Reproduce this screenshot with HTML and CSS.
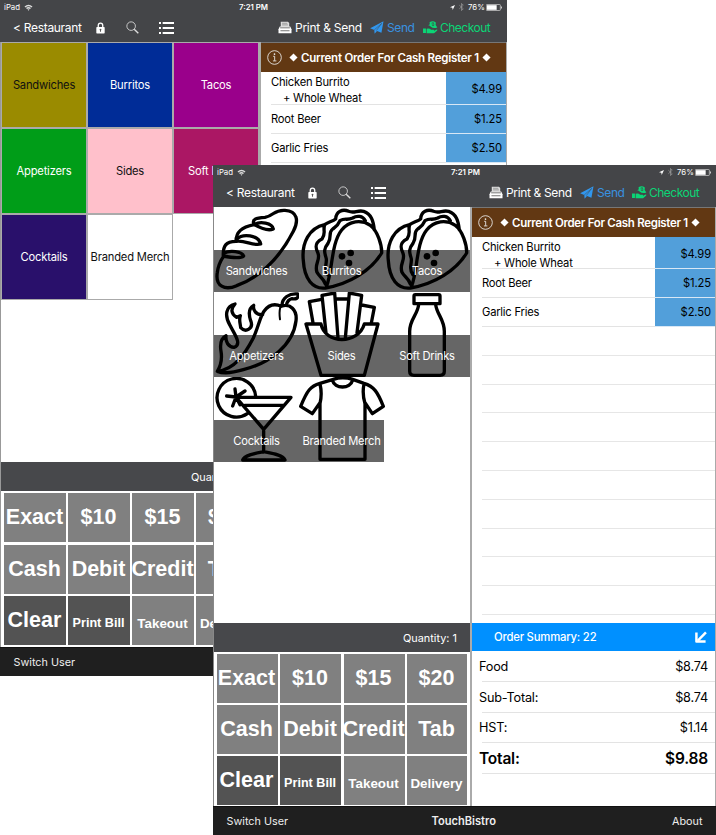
FILE: index.html
```
<!DOCTYPE html>
<html lang="en">
<head>
<meta charset="utf-8">
<title>TouchBistro</title>
<link rel="stylesheet" href="styles.css">
</head>
<body>
<svg class="sprite" aria-hidden="true">
  <symbol id="wifi" viewBox="0 0 18 14"><path d="M1 5Q9-2 17 5L15 7Q9 2 3 7ZM4 8Q9 4 14 8L12 10Q9 7.500 6 10ZM7 11Q9 9.500 11 11L9 13.500Z" fill="#ddd"/></symbol>
  <symbol id="lock" viewBox="0 0 28 36"><path d="M7 16V10a7 7 0 0 1 14 0v6" fill="none" stroke="#fff" stroke-width="4"/><rect x="1" y="15" width="26" height="20" rx="2" fill="#fff"/><path d="M14 20a3 3 0 0 1 1.500 5.500V30h-3v-4.500A3 3 0 0 1 14 20" fill="#555"/></symbol>
  <symbol id="search" viewBox="0 0 38 38"><circle cx="15" cy="15" r="12.500" fill="none" stroke="#ddd" stroke-width="2.500"/><path d="M24 24L36 36" stroke="#ddd" stroke-width="4"/></symbol>
  <symbol id="list" viewBox="0 0 45 36"><path d="M0 3h6M0 18h6M0 33h6M11 3h34M11 18h34M11 33h34" stroke="#fff" stroke-width="6"/></symbol>
  <symbol id="printer" viewBox="0 0 42 40"><path d="M8 18V2h22l4 4v12Z" fill="#ddd"/><path d="M12 7h16M12 12h18" stroke="#777" stroke-width="2"/><path d="M5 17h32l4 8v13H1V25Z" fill="#fff"/><path d="M6 21h30M7 30h28" stroke="#555" stroke-width="2.500"/></symbol>
  <symbol id="plane" viewBox="0 0 40 38"><path d="M39 1L33 34 20 29 13 37 12 26 0 21Z" fill="#3197ef"/><path d="M12 26L34 7 18 28" fill="none" stroke="#454648" stroke-width="1.500"/></symbol>
  <symbol id="pay" viewBox="0 0 46 40"><path d="M0 23h9v14H0ZM11 24q8-3 14 3h8q3 2-2 4h-9l12-1 8-4q4 0 1 4l-9 8H11Z" fill="#0bd576"/><path d="M20 4q10-7 20 1-3 6 1 10l3 5q-12 4-20-2-2-4-8-5l5-3Z" fill="#0bd576"/><path d="M26 7q4-3 8 0M27 12q4 4 8 0M31 5v10" fill="none" stroke="#454648" stroke-width="2"/></symbol>
  <symbol id="arrow" viewBox="0 0 15 15"><path d="M15 0L8 15 7 8 0 7Z" fill="#fff"/></symbol>
  <symbol id="bt" viewBox="0 0 14 22"><path d="M1 6l11 10-5 5V1l5 5L1 16" fill="none" stroke="#999" stroke-width="2"/></symbol>
  <symbol id="battery" viewBox="0 0 48 20"><rect x="1" y="1" width="42" height="18" rx="2" fill="none" stroke="#ddd" stroke-width="2"/><path d="M3 3h29v14H3Z" fill="#fff"/><path d="M45 6v8l3-2V8Z" fill="#ccc"/></symbol>
  <symbol id="info" viewBox="0 0 44 44"><circle cx="22" cy="22" r="20" fill="none" stroke="#eee" stroke-width="2.500"/><circle cx="22" cy="12" r="2.500" fill="#eee"/><path d="M18 18.500h4.500v13M17.500 32h10" fill="none" stroke="#eee" stroke-width="2.500"/></symbol>
  <symbol id="diamond" viewBox="0 0 10 10"><path d="M5 0.500L9.500 5 5 9.500 0.500 5Z" fill="#fff"/></symbol>
  <symbol id="down-left" viewBox="0 0 34 34"><path d="M31 4L8 27" stroke="#fff" stroke-width="7" fill="none"/><path d="M4 4V30H30" stroke="#fff" stroke-width="7" fill="none" stroke-linejoin="round"/></symbol>

  <symbol id="bread" viewBox="12 9 258 255"><path d="M132 62C125 45 138 42 165 40C195 34 190 17 225 19C262 21 267 50 250 82C215 150 160 215 80 245C45 260 15 247 22 205C25 182 32 170 40 158C38 125 48 112 78 112C78 83 95 70 132 62C150 50 187 57 190 75C173 82 150 72 130 60M80 105C98 88 145 92 152 120C130 127 105 108 79 112M40 148C60 137 96 142 101 156C90 166 60 160 40 156"/></symbol>
  <symbol id="taco" viewBox="9 9 258 255"><path d="M86 62C40 72 16 116 22 170C25 225 50 256 88 252C160 240 225 200 257 147C258 125 245 80 223 64C196 46 160 50 137 78C105 118 110 200 92 246M86 62C95 55 110 52 119 45C120 22 140 14 158 22C175 29 185 17 203 22C226 30 232 50 235 78M86 62C80 80 91 87 78 105C58 115 56 128 66 148C74 168 54 180 63 205C70 219 83 222 88 240M208 50C200 35 183 34 170 42C153 50 147 41 132 50C125 67 117 70 110 75C95 86 109 99 96 118C79 139 88 150 91 165C92 185 82 196 96 213"/><g class="seed"><circle cx="138" cy="157" r="10"/><circle cx="164" cy="147" r="10"/><circle cx="159" cy="177" r="10"/></g></symbol>
  <symbol id="pepper" viewBox="12 12 258 255"><path d="M22 250C75 243 105 198 130 150C145 117 150 87 162 70C178 47 198 48 214 55C240 44 262 67 258 98C250 170 180 225 100 245C70 254 40 257 22 250C34 230 37 213 33 190C29 165 34 150 48 143C46 162 55 177 72 178C98 169 72 137 60 112C43 83 47 55 75 48C62 63 62 76 80 88L91 83C86 97 91 105 92 119C107 135 132 122 122 98C115 77 117 60 131 52C128 65 138 82 158 80M216 51C217 30 237 15 263 18C268 31 257 34 246 32C235 34 231 42 229 52"/><path d="M211 58Q207 72 210 94" stroke-width="6"/></symbol>
  <symbol id="fries" viewBox="9 12 258 255"><path d="M30 108H75C87 170 187 170 205 108H246L205 262H75ZM51 104L40 41 77 34M90 135L78 22 116 15 126 150M120 33H157M148 150L160 15 197 22 183 134M197 51L235 58 226 105"/></symbol>
  <symbol id="bottle" viewBox="265 12 258 255"><path d="M355 24Q355 20 359 20H429Q433 20 433 24V47H355ZM369 50C366 80 342 94 342 130V250Q342 262 355 262H433Q446 262 446 250V130C446 94 424 80 420 50"/></symbol>
  <symbol id="cocktail" viewBox="12 15 258 255"><path d="M137 73A58 58 0 1 0 112 125M78 76H243L161 172ZM104 100H220M161 172V240M98 264C103 248 140 243 161 239C182 243 220 248 225 264ZM78 75L75 51M78 75L50 72M78 75L68 102M78 75L90 98M78 75L105 57"/></symbol>
  <symbol id="shirt" viewBox="267 15 258 255"><path d="M330 95V262H465V95M330 92L307 125 272 103C292 54 302 42 330 34L370 22Q398 13 428 22L462 34C492 43 503 60 520 103L487 125 465 92M330 36Q337 65 330 95M462 36Q456 65 465 95M367 24C374 52 421 52 428 24"/></symbol>
</svg>

<main class="stage">
  <section class="ipad ipad-back">
    <header class="top">
      <div class="status"><span class="device">iPad</span><svg class="i-wifi"><use href="#wifi"/></svg><span class="clock">7:21 PM</span><svg class="i-arrow"><use href="#arrow"/></svg><svg class="i-bt"><use href="#bt"/></svg><span class="pct">76%</span><svg class="i-battery"><use href="#battery"/></svg></div>
      <nav class="tools"><span class="back">&lt; Restaurant</span><svg class="i-lock"><use href="#lock"/></svg><svg class="i-search"><use href="#search"/></svg><svg class="i-list"><use href="#list"/></svg><svg class="i-printer"><use href="#printer"/></svg><span class="t-print">Print &amp; Send</span><svg class="i-plane"><use href="#plane"/></svg><span class="t-send">Send</span><svg class="i-pay"><use href="#pay"/></svg><span class="t-check">Checkout</span></nav>
    </header>
    <div class="body">
      <div class="left">
        <div class="menu swatches">
          <div class="tile olive">Sandwiches</div><div class="tile blue">Burritos</div><div class="tile purple">Tacos</div>
          <div class="tile green">Appetizers</div><div class="tile pink">Sides</div><div class="tile rose">Soft Drinks</div>
          <div class="tile indigo">Cocktails</div><div class="tile plain">Branded Merch</div>
        </div>
        <div class="qty"><span>Quantity: 1</span></div>
        <div class="keys">
          <div>Exact</div><div>$10</div><div>$15</div><div>$20</div>
          <div>Cash</div><div>Debit</div><div>Credit</div><div>Tab</div>
          <div class="dark">Clear</div><div class="dark small bill">Print Bill</div><div class="small">Takeout</div><div class="small">Delivery</div>
        </div>
      </div>
      <div class="right">
        <div class="order-head"><svg class="i-info"><use href="#info"/></svg><svg class="i-dia"><use href="#diamond"/></svg><span>Current Order For Cash Register 1</span><svg class="i-dia"><use href="#diamond"/></svg></div>
        <div class="line tall"><div class="item">Chicken Burrito<span class="mod">+ Whole Wheat</span></div><div class="price">$4.99</div></div>
        <div class="line"><div class="item">Root Beer</div><div class="price">$1.25</div></div>
        <div class="line"><div class="item">Garlic Fries</div><div class="price">$2.50</div></div>
      </div>
    </div>
    <footer class="foot"><span class="f-switch">Switch User</span></footer>
  </section>

  <section class="ipad ipad-front">
    <header class="top">
      <div class="status"><span class="device">iPad</span><svg class="i-wifi"><use href="#wifi"/></svg><span class="clock">7:21 PM</span><svg class="i-arrow"><use href="#arrow"/></svg><svg class="i-bt"><use href="#bt"/></svg><span class="pct">76%</span><svg class="i-battery"><use href="#battery"/></svg></div>
      <nav class="tools"><span class="back">&lt; Restaurant</span><svg class="i-lock"><use href="#lock"/></svg><svg class="i-search"><use href="#search"/></svg><svg class="i-list"><use href="#list"/></svg><svg class="i-printer"><use href="#printer"/></svg><span class="t-print">Print &amp; Send</span><svg class="i-plane"><use href="#plane"/></svg><span class="t-send">Send</span><svg class="i-pay"><use href="#pay"/></svg><span class="t-check">Checkout</span></nav>
    </header>
    <div class="body">
      <div class="left">
        <div class="menu pictures">
          <div class="pic"><svg><use href="#bread"/></svg><span>Sandwiches</span></div>
          <div class="pic"><svg><use href="#taco"/></svg><span>Burritos</span></div>
          <div class="pic"><svg><use href="#taco"/></svg><span>Tacos</span></div>
          <div class="pic"><svg><use href="#pepper"/></svg><span>Appetizers</span></div>
          <div class="pic"><svg><use href="#fries"/></svg><span>Sides</span></div>
          <div class="pic"><svg><use href="#bottle"/></svg><span>Soft Drinks</span></div>
          <div class="pic"><svg><use href="#cocktail"/></svg><span>Cocktails</span></div>
          <div class="pic"><svg><use href="#shirt"/></svg><span>Branded Merch</span></div>
        </div>
        <div class="qty"><span>Quantity: 1</span></div>
        <div class="keys">
          <div>Exact</div><div>$10</div><div>$15</div><div>$20</div>
          <div>Cash</div><div>Debit</div><div>Credit</div><div>Tab</div>
          <div class="dark">Clear</div><div class="dark small bill">Print Bill</div><div class="small">Takeout</div><div class="small">Delivery</div>
        </div>
      </div>
      <div class="right">
        <div class="order-head"><svg class="i-info"><use href="#info"/></svg><svg class="i-dia"><use href="#diamond"/></svg><span>Current Order For Cash Register 1</span><svg class="i-dia"><use href="#diamond"/></svg></div>
        <div class="line tall"><div class="item">Chicken Burrito<span class="mod">+ Whole Wheat</span></div><div class="price">$4.99</div></div>
        <div class="line"><div class="item">Root Beer</div><div class="price">$1.25</div></div>
        <div class="line"><div class="item">Garlic Fries</div><div class="price">$2.50</div></div>
        <div class="blank"></div><div class="blank"></div><div class="blank"></div><div class="blank"></div><div class="blank"></div><div class="blank"></div><div class="blank"></div><div class="blank"></div><div class="blank"></div><div class="blank"></div>
        <div class="summary">
          <div class="sum-head"><span>Order Summary: 22</span><svg class="i-dl"><use href="#down-left"/></svg></div>
          <div class="sum-row"><span>Food</span><span>$8.74</span></div>
          <div class="sum-row"><span>Sub-Total:</span><span>$8.74</span></div>
          <div class="sum-row"><span>HST:</span><span>$1.14</span></div>
          <div class="sum-row total"><span>Total:</span><span>$9.88</span></div>
        </div>
      </div>
    </div>
    <footer class="foot"><span class="f-switch">Switch User</span><span class="f-brand">TouchBistro</span><span class="f-about">About</span></footer>
  </section>
</main>
</body>
</html>
```

FILE: styles.css
```
* { box-sizing: border-box; }
body { margin: 0; background: #fff; font-family: Inter, "Liberation Sans", sans-serif; }
svg { display: block; flex: none; }
span { white-space: nowrap; }
.sprite { position: absolute; width: 0; height: 0; }
.stage { position: relative; width: 716px; height: 835px; overflow: hidden; }

/* Two overlapping device windows */
.ipad { position: absolute; display: flex; flex-direction: column; background: #fff; overflow: hidden; }
.ipad-back { left: 0; top: 0; width: 507px; height: 676px; }
.ipad-front { left: 213px; top: 165px; width: 503px; height: 670px; }

.top { height: 42px; flex: none; background: #444548; color: #fff; }
.status { height: 14px; display: flex; align-items: center; padding-left: 4px; font-size: 7.8px; }
.device { width: 20px; }
.i-wifi { width: 9px; height: 7px; }
.clock { width: 211px; margin-left: 206px; font-weight: 600; font-size: 7.8px; }
.i-arrow { width: 5px; height: 5px; }
.i-bt { width: 5px; height: 8px; margin-left: 4px; }
.pct { width: 18px; margin-left: 4px; }
.i-battery { width: 16px; height: 7px; }
.ipad-front .clock { width: 208px; margin-left: 205px; }

.tools { height: 27px; display: flex; align-items: center; padding-left: 13px; font-size: 12px; }
.back { width: 83px; letter-spacing: -.3px; }
.i-lock { width: 9px; height: 12px; }
.i-search { width: 13px; height: 13px; margin-left: 21px; }
.i-list { width: 15px; height: 12px; margin-left: 20px; }
.i-printer { width: 14px; height: 13px; margin-left: 104px; }
.t-print { width: 71px; margin-left: 3px; letter-spacing: -.25px; }
.i-plane { width: 14px; height: 13px; margin-left: 4px; }
.t-send { width: 34px; margin-left: 3px; color: #3992e0; letter-spacing: -.4px; }
.i-pay { width: 15px; height: 13px; margin-left: 2px; }
.t-check { margin-left: 2px; color: #0bd576; letter-spacing: -.5px; }
.ipad-front .back { width: 82px; }
.ipad-front .i-printer { margin-left: 103px; }
.ipad-front .t-print { letter-spacing: -.35px; }
.ipad-front .i-plane { margin-left: 3px; }
.ipad-front .t-send { width: 33px; }

.body { flex: 1; min-height: 0; display: flex; }
.left { display: flex; flex-direction: column; }
.right { flex: 1; min-width: 0; display: flex; flex-direction: column; border-left: 3px solid #aaa; border-right: 1px solid #aaa; }
.ipad-back .left { width: 258px; border-left: 1px solid #999; }
.ipad-front .left { width: 257px; border-left: 1px solid #888; }
.ipad-front .right { border-left-width: 2px; }
.menu { flex: 1; min-height: 0; display: grid; align-content: start; }
.swatches { grid-template-columns: repeat(3, 86px); grid-auto-rows: 86px; }
.tile { display: flex; align-items: center; justify-content: center; border: 1px solid #aaa; color: #fff; font-size: 11.2px; letter-spacing: -.2px; white-space: nowrap; }
.olive { background: #9a8b00; color: #111; }
.blue { background: #002c97; }
.purple { background: #9a008b; }
.green { background: #009d18; }
.pink { background: #ffc0cb; color: #111; }
.rose { background: #ab1764; }
.indigo { background: #29106b; }
.plain { background: #fff; color: #111; }

/* Picture tiles: grey band, then the drawing, then the label */
.pictures { grid-template-columns: 85px 85px 86px; grid-auto-rows: 85px; }
.pic { display: flex; align-items: flex-end; position: relative; background: linear-gradient(#fff 43px, #666 43px); }
.pic svg { position: absolute; left: 0; top: 0; width: 86px; height: 85px; fill: none; stroke: #000; stroke-width: 10; stroke-linejoin: round; stroke-linecap: round; }
.seed { fill: #000; stroke: none; }
.pic span { z-index: 2; width: 100%; height: 42px; color: #fff; text-align: center; line-height: 43px; font-size: 11.2px; letter-spacing: -.25px; }

.qty { height: 29px; flex: none; background: #47484b; color: #fff; display: flex; align-items: center; justify-content: flex-end; padding-right: 13px; font-size: 10.9px; }
.keys { height: 156px; flex: none; display: grid; grid-template-columns: 62px 62px 62px 61px; grid-template-rows: repeat(3, 49px); gap: 2.5px 2px; padding: 2px 3px; background: #fff; }
.keys div { display: flex; align-items: center; justify-content: center; padding-right: 1px; background: #808080; color: #fff; font: bold 21.5px "Liberation Sans", Arial, sans-serif; white-space: nowrap; }
.keys .dark { background: #535353; }
.keys .small { font-size: 13.4px; padding-top: 5px; }
.keys .bill { font-size: 12.6px; }
.ipad-front .keys { height: 154px; grid-template-columns: 61px 61px 61px 60px; gap: 2px 2.5px; padding-left: 2.5px; }

.order-head { height: 30px; flex: none; display: flex; align-items: center; background: #623813; color: #fff; font-size: 11.5px; font-weight: 600; padding-left: 6px; border-top: 1px solid #777; }
.i-info { width: 15px; height: 15px; margin-right: 7px; }
.i-dia { width: 9px; height: 9px; }
.order-head span { margin: 0 3px; letter-spacing: -.24px; }
.ipad-front .order-head span { letter-spacing: -.3px; }
.line { height: 29px; flex: none; display: flex; }
.line.tall { height: 33px; }
.item { flex: 1; margin-left: 10px; border-bottom: 1px solid #e3e3e3; font-size: 11.2px; line-height: 29px; letter-spacing: -.22px; color: #000; }
.tall .item { line-height: 16px; padding-top: 2px; }
.mod { display: block; padding-left: 12px; }
.price { width: 60px; background: #529fda; border-bottom: 1px solid #d8e7f5; text-align: right; padding-right: 4px; font-size: 11.2px; letter-spacing: -.1px; line-height: 29px; color: #000; }
.tall .price { line-height: 34px; }
.ipad-front .line.tall { height: 32px; }
.blank { height: 28.8px; flex: none; margin-left: 10px; border-bottom: 1px solid #e6e6e6; }

.summary { margin-top: auto; height: 183px; flex: none; }
.sum-head { height: 28px; display: flex; align-items: center; justify-content: space-between; background: #0090ff; color: #fff; padding: 0 8px 0 22px; font-size: 11.3px; font-weight: 500; letter-spacing: -.2px; }
.i-dl { width: 12px; height: 12px; }
.sum-row { height: 30.8px; display: flex; align-items: center; justify-content: space-between; padding: 0 7px; font-size: 12.7px; letter-spacing: -.2px; color: #000; background: linear-gradient(#e3e3e3, #e3e3e3) 10px 100% / 100% 1px no-repeat; }
.total { font-size: 15.5px; font-weight: 600; }

.foot { height: 29px; flex: none; display: flex; align-items: center; background: #1f1f1f; color: #eee; font-size: 10.8px; padding-left: 13.5px; border-top: 1px solid #111; }
.f-switch { width: 205px; }
.f-brand { width: 240.5px; font-weight: 600; font-size: 11.1px; }
```
